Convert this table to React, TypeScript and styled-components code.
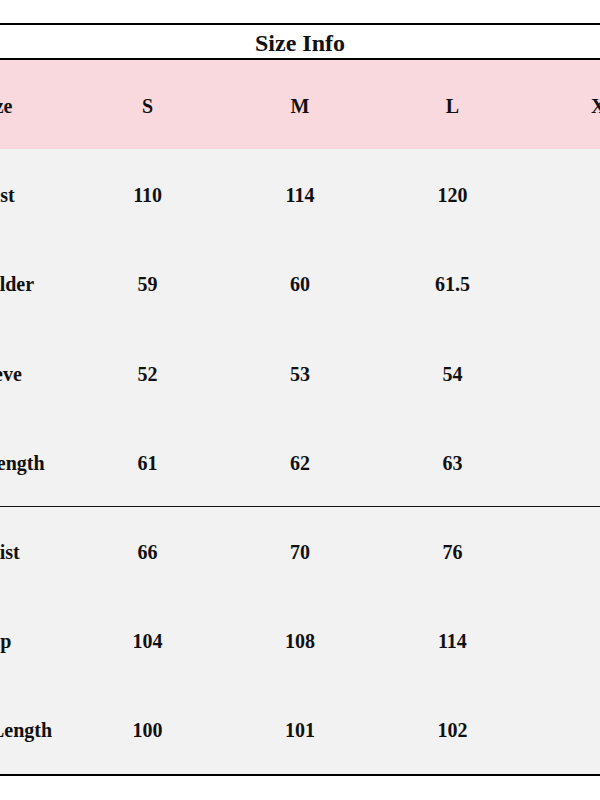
import React from 'react';
import styled, { createGlobalStyle } from 'styled-components';

const GlobalStyle = createGlobalStyle`
  html, body {
    margin: 0;
    padding: 0;
    background: #fff;
  }
`;

const Page = styled.div`
  width: 600px;
  height: 800px;
  overflow: hidden;
  background: #fff;
  font-family: "Liberation Serif", "Times New Roman", serif;
  color: #111;
`;

const Sheet = styled.div`
  width: 762px;
  margin: 23px 0 0 -81px;
  border-top: 2px solid #000;
  border-bottom: 2px solid #000;
`;

const Title = styled.div`
  height: 33px;
  line-height: 36px;
  text-align: center;
  font-size: 24px;
  font-weight: bold;
  background: #fff;
  border-bottom: 2px solid #000;
`;

const Row = styled.div<{ $head?: boolean; $divider?: boolean }>`
  display: grid;
  grid-template-columns: repeat(5, 1fr);
  align-items: center;
  height: ${(p) => (p.$divider ? '88px' : '89.3px')};
  background: ${(p) => (p.$head ? '#f9d9de' : '#f2f2f2')};
  border-top: ${(p) => (p.$divider ? '1.5px solid #111' : 'none')};
`;

const Cell = styled.div`
  padding-top: 3px;
  text-align: center;
  font-size: 20px;
  font-weight: bold;
  white-space: nowrap;
`;

const sizes = ['S', 'M', 'L', 'XL'];

// the XL column sits past the right edge of the shot, so only S/M/L carry values
const topRows: [string, string[]][] = [
  ['Bust', ['110', '114', '120']],
  ['Shoulder', ['59', '60', '61.5']],
  ['Sleeve', ['52', '53', '54']],
  ['Top Length', ['61', '62', '63']],
];

const bottomRows: [string, string[]][] = [
  ['Waist', ['66', '70', '76']],
  ['Hip', ['104', '108', '114']],
  ['Pants Length', ['100', '101', '102']],
];

export default function App() {
  return (
    <Page>
      <GlobalStyle />
      <Sheet>
        <Title>Size Info</Title>
        <Row $head>
          <Cell>Size</Cell>
          {sizes.map((s) => (
            <Cell key={s}>{s}</Cell>
          ))}
        </Row>
        {topRows.map(([label, vals]) => (
          <Row key={label}>
            <Cell>{label}</Cell>
            {vals.map((v, i) => (
              <Cell key={i}>{v}</Cell>
            ))}
          </Row>
        ))}
        {bottomRows.map(([label, vals], idx) => (
          <Row key={label} $divider={idx === 0}>
            <Cell>{label}</Cell>
            {vals.map((v, i) => (
              <Cell key={i}>{v}</Cell>
            ))}
          </Row>
        ))}
      </Sheet>
    </Page>
  );
}
